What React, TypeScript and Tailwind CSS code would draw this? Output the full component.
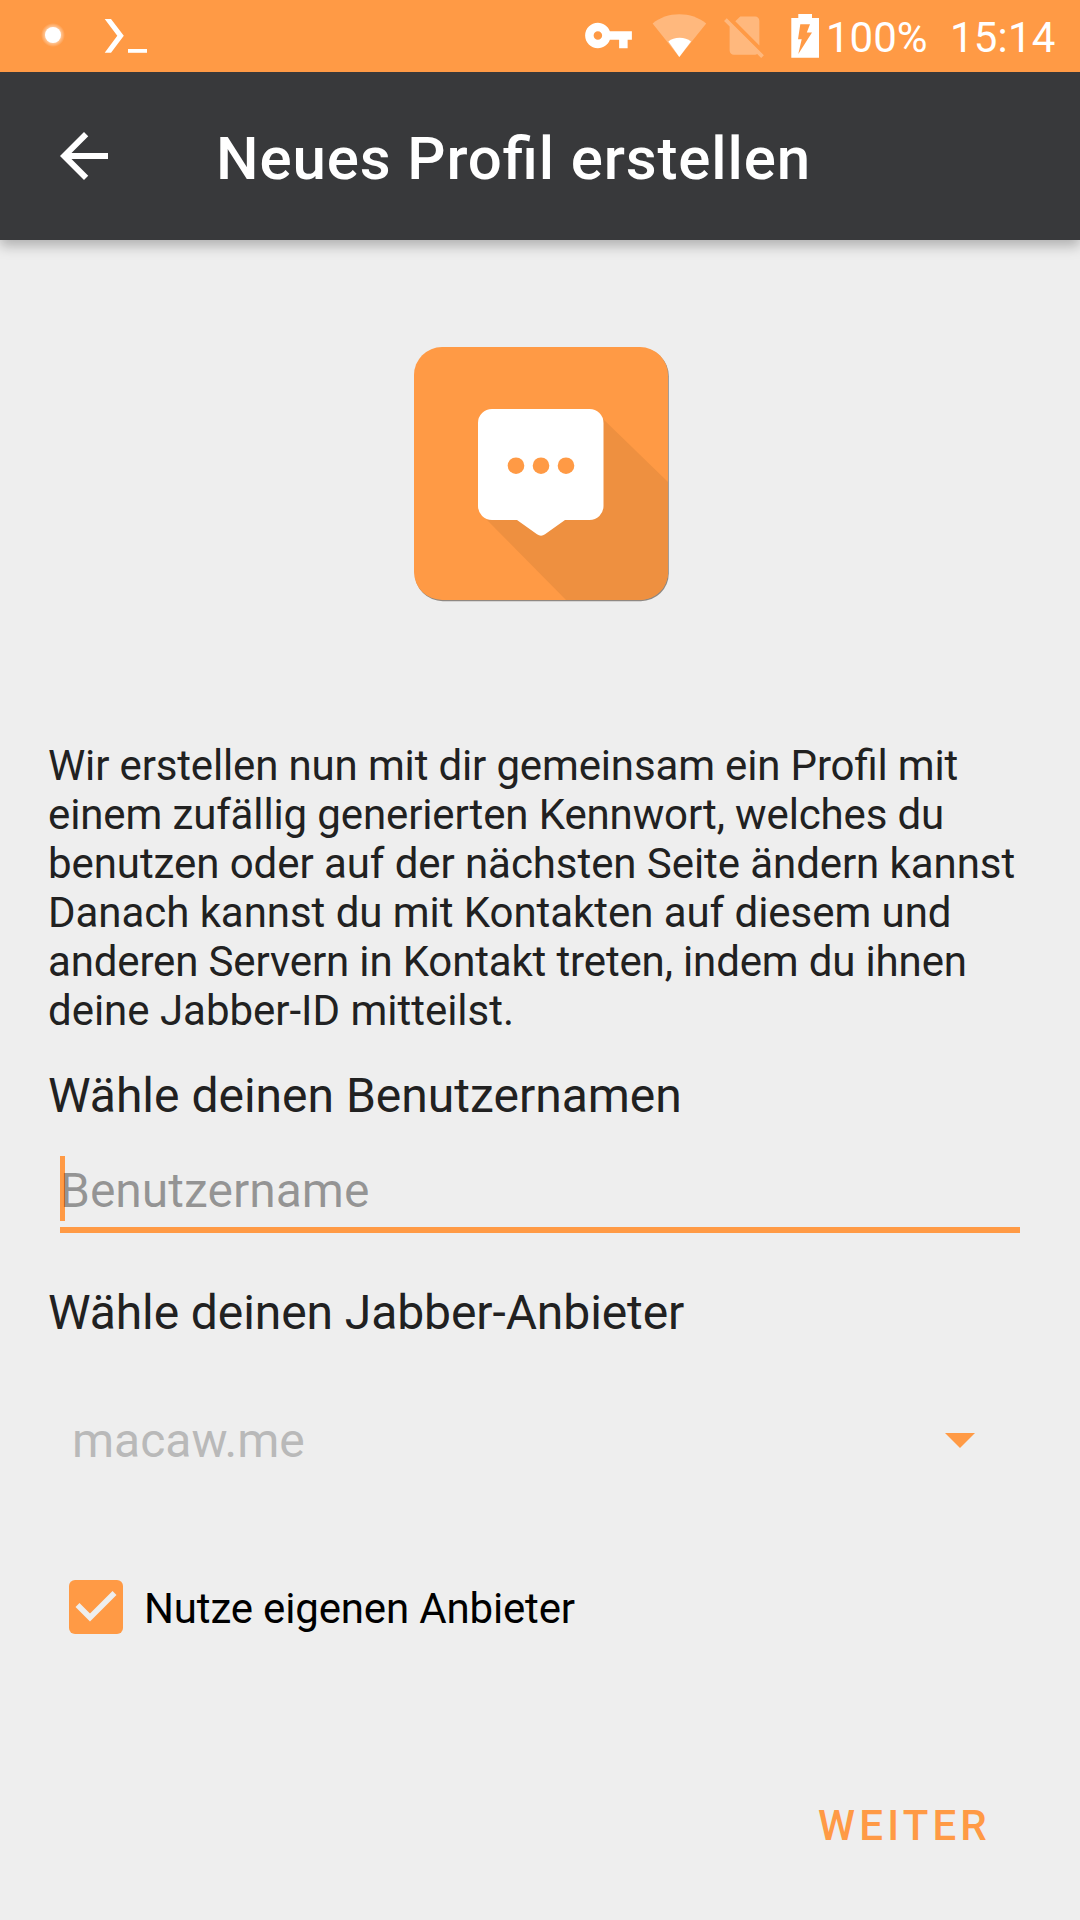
import { useState } from "react";

const introLines = [
  { text: "Wir erstellen nun mit dir gemeinsam ein Profil mit", spacing: "tracking-[-0.15px]" },
  { text: "einem zufällig generierten Kennwort, welches du", spacing: "tracking-[-0.13px]" },
  { text: "benutzen oder auf der nächsten Seite ändern kannst", spacing: "tracking-[-0.07px]" },
  { text: "Danach kannst du mit Kontakten auf diesem und", spacing: "tracking-[-0.05px]" },
  { text: "anderen Servern in Kontakt treten, indem du ihnen", spacing: "tracking-[-0.15px]" },
  { text: "deine Jabber-ID mitteilst.", spacing: "tracking-[-0.02px]" },
];

function StatusBar() {
  return (
    <div className="relative z-10 flex h-[72px] items-start bg-[#ff9a45] text-white">

      {/* notifications */}
      <svg className="ml-10 mt-[22px] h-[26px] w-[26px]" viewBox="0 0 26 26">
        <defs>
          <radialGradient id="glow">
            <stop offset="0.62" stopColor="#fff" stopOpacity="0.5" />
            <stop offset="1" stopColor="#fff" stopOpacity="0" />
          </radialGradient>
        </defs>
        <circle cx="13" cy="13" r="12" fill="url(#glow)" />
        <circle cx="13" cy="13" r="8" fill="currentColor" />
      </svg>
      <svg className="ml-[38px] mt-[18px] h-9 w-[44px]" viewBox="0 0 44 36" fill="currentColor">
        <path d="M0.7 1H7L19.8 17.8L7 34.8H0.7L13.3 17.8Z" />
        <path d="M24 31H43V34.8H24Z" />
      </svg>

      {/* system icons */}
      <svg className="ml-auto mt-[10px] h-[51px] w-[51px]" viewBox="0 0 24 24" fill="currentColor">
        <path d="M12.65 10C11.83 7.67 9.61 6 7 6c-3.31 0-6 2.69-6 6s2.69 6 6 6c2.61 0 4.83-1.67 5.65-4H17v4h4v-4h2v-4H12.65zM7 14c-1.1 0-2-.9-2-2s.9-2 2-2 2 .9 2 2-.9 2-2 2z" />
      </svg>
      <svg className="ml-[18px] mt-[14px] h-[44px] w-[55px]" viewBox="0 0 55 44" fill="currentColor">
        <path opacity="0.3" d="M27.3 43L0.6 9.4C8 3.5 17 0.3 27.3 0.3S46.6 3.5 54.2 9.4Z" />
        <path d="M27.3 43L16.4 27.4C19.5 25 23 23.8 27.6 23.8S35.8 25 39 27.4Z" />
      </svg>
      <svg className="ml-3 mt-[10px] h-[51px] w-[51px] opacity-30" viewBox="0 0 24 24" fill="currentColor">
        <path d="M18.99 5c0-1.1-.89-2-1.99-2h-7L7.66 5.34 19 16.68 18.99 5zM3.65 3.88L2.38 5.15 5 7.77V19c0 1.1.9 2 2 2h10.01c.35 0 .67-.1.96-.26l1.88 1.88 1.27-1.27L3.65 3.88z" />
      </svg>
      <svg className="ml-[21px] mt-[14px] h-[44px] w-7" viewBox="0 0 28 44" fill="currentColor">
        <path
          fillRule="evenodd"
          d="M7.3 0H21V4H28V43.7H0.3V4H7.3ZM9.3 10.3L7 25.3H10.7L7.3 40L21 18.5H15.8L19 10.3Z"
        />
      </svg>
      <span className="ml-[7px] mt-[13px] w-[104px] text-[42px] leading-[49px]">100%</span>
      <span className="ml-5 mt-[13px] w-[130px] text-[42px] leading-[49px] tracking-[0.2px]">15:14</span>

    </div>
  );
}

function AppLogo() {
  return (
    <svg className="h-64 w-64" viewBox="0 0 256 256">
      <defs>
        <clipPath id="tile">
          <rect width="254" height="253" rx="28" />
        </clipPath>
      </defs>
      <rect x="0.8" y="1.2" width="254" height="253" rx="28" fill="#8f8882" />
      <g clipPath="url(#tile)">
        <rect width="254" height="253" fill="#ff9a45" />
        <path d="M186 69L256 137V256H155L73 173Z" fill="#ee9040" />
      </g>
      <path
        d="M78 62H175.5A14 14 0 0 1 189.5 76V159A14 14 0 0 1 175.5 173H151L131 187.3Q127 190 123 187.3L103 173H78A14 14 0 0 1 64 159V76A14 14 0 0 1 78 62Z"
        fill="#fff"
      />
      <circle cx="102" cy="118.7" r="8.3" fill="#ff9a45" />
      <circle cx="127" cy="118.7" r="8.3" fill="#ff9a45" />
      <circle cx="152" cy="118.7" r="8.3" fill="#ff9a45" />
    </svg>
  );
}

export default function App() {

  const [ownProvider, setOwnProvider] = useState(true);

  return (

    <div className="flex h-[1920px] w-[1080px] flex-col overflow-hidden bg-[#eeeeee] font-['Roboto',sans-serif] text-[#212121] [font-feature-settings:'liga']">

      <StatusBar />

      <header className="flex h-[168px] items-center bg-[#38393b] pl-12 text-white shadow-[0_6px_12px_rgba(0,0,0,0.26)]">
        <svg className="h-[72px] w-[72px]" viewBox="0 0 24 24" fill="currentColor">
          <path d="M20 11H7.83l5.59-5.59L12 4l-8 8 8 8 1.41-1.41L7.83 13H20v-2z" />
        </svg>
        <h1 className="ml-24 mt-1.5 text-[60px] font-medium leading-[70px] tracking-[0.88px]">
          Neues Profil erstellen
        </h1>
      </header>

      <main className="flex flex-col px-12">

        <div className="mt-[107px] flex justify-center pl-1">
          <AppLogo />
        </div>

        <p className="mt-[138px] whitespace-nowrap text-[42px] leading-[49px]">
          {introLines.map((line) => (
            <span key={line.text} className={`block ${line.spacing}`}>{line.text}</span>
          ))}
        </p>

        <label className="mt-[33px] text-[48px] leading-[56px]">
          Wähle deinen Benutzernamen
        </label>

        <div className="mx-3 mt-8 flex h-[77px] items-start border-b-[6px] border-[#ff9a45]">
          <span className="h-[65px] w-[5px] bg-[#ff9a45]" />
          <span className="-ml-[5px] mt-[7px] text-[48px] leading-[56px] text-black/38">
            Benutzername
          </span>
        </div>

        <label className="mt-[52px] text-[48px] leading-[56px] tracking-[-0.09px]">
          Wähle deinen Jabber-Anbieter
        </label>

        <div className="mt-[72px] flex h-[56px] items-center justify-between pl-6 pr-[57px]">
          <span className="text-[48px] leading-[56px] text-[#b9b9b9]">macaw.me</span>
          <svg className="-mt-0.5 h-[15px] w-[30px]" viewBox="0 0 30 15" fill="#ff9a45">
            <path d="M0 0H30L15 15Z" />
          </svg>
        </div>

        <button
          className="mt-[111px] flex items-center pl-[21px] text-left"
          onClick={() => setOwnProvider(!ownProvider)}
        >
          <svg className="h-[54px] w-[54px]" viewBox="0 0 54 54">
            <rect width="54" height="54" rx="6" fill="#ff9a45" />
            {ownProvider && (
              <path d="M8.5 25L21 37.5L45.5 13" fill="none" stroke="#eeeeee" strokeWidth="5.6" />
            )}
          </svg>
          <span className="ml-[21px] mt-[3px] text-[42px] leading-[49px] tracking-[-0.16px] text-black">
            Nutze eigenen Anbieter
          </span>
        </button>

        <button className="mr-[41px] mt-[167px] self-end text-[42px] font-medium leading-[49px] tracking-[4.2px] text-[#ff9a45]">
          WEITER
        </button>

      </main>

    </div>

  );
}
